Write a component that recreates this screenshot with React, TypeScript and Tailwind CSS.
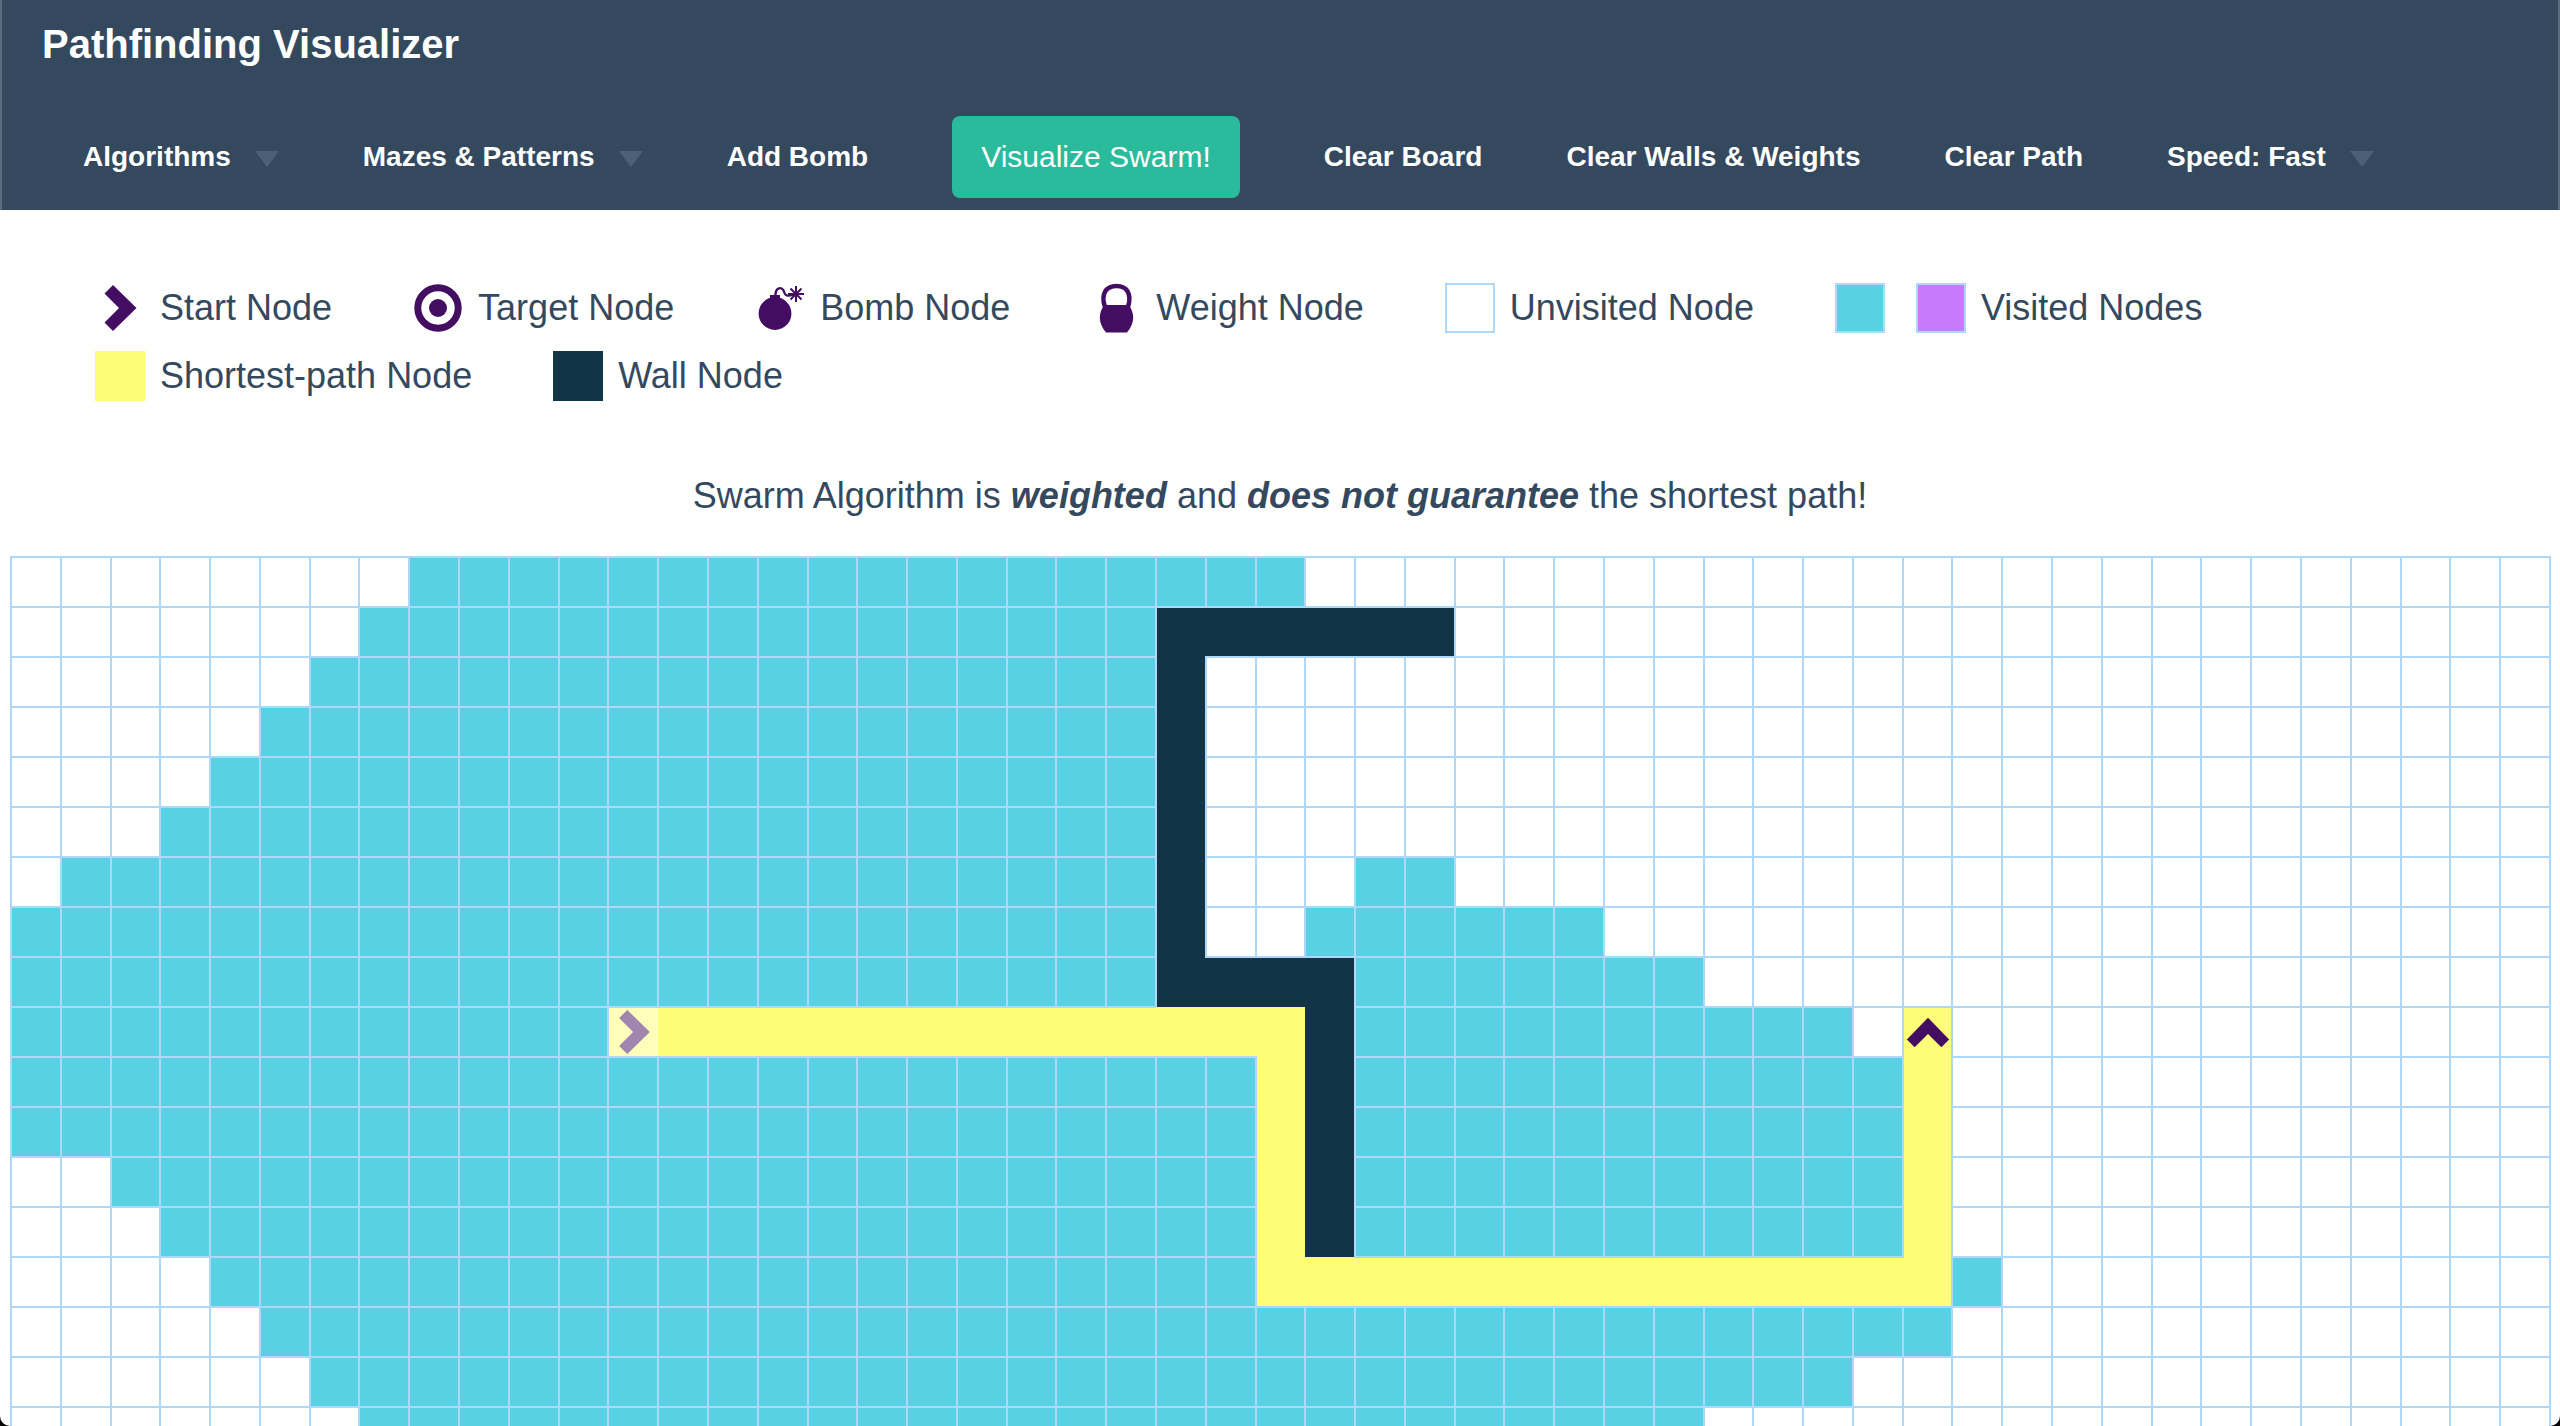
import React from "react";

type CellKind = "empty" | "visited" | "wall" | "path" | "start" | "target";
type Run = [kind: CellKind, from: number, to: number];

const COLUMNS = 51;

const ROWS: Run[][] = [
  [["visited", 8, 25]],
  [["visited", 7, 22], ["wall", 23, 28]],
  [["visited", 6, 22], ["wall", 23, 23]],
  [["visited", 5, 22], ["wall", 23, 23]],
  [["visited", 4, 22], ["wall", 23, 23]],
  [["visited", 3, 22], ["wall", 23, 23]],
  [["visited", 1, 22], ["wall", 23, 23], ["visited", 27, 28]],
  [["visited", 0, 22], ["wall", 23, 23], ["visited", 26, 31]],
  [["visited", 0, 22], ["wall", 23, 26], ["visited", 27, 33]],
  [["visited", 0, 11], ["start", 12, 12], ["path", 13, 25], ["wall", 26, 26], ["visited", 27, 36], ["target", 38, 38]],
  [["visited", 0, 24], ["path", 25, 25], ["wall", 26, 26], ["visited", 27, 37], ["path", 38, 38]],
  [["visited", 0, 24], ["path", 25, 25], ["wall", 26, 26], ["visited", 27, 37], ["path", 38, 38]],
  [["visited", 2, 24], ["path", 25, 25], ["wall", 26, 26], ["visited", 27, 37], ["path", 38, 38]],
  [["visited", 3, 24], ["path", 25, 25], ["wall", 26, 26], ["visited", 27, 37], ["path", 38, 38]],
  [["visited", 4, 24], ["path", 25, 38], ["visited", 39, 39]],
  [["visited", 5, 38]],
  [["visited", 6, 36]],
  [["visited", 7, 33]],
];

const CELL_CLASS: Record<CellKind, string> = {
  empty: "border-2 border-[#afd8f8]",
  visited: "border-2 border-[#afd8f8] bg-[#59d0e4]",
  wall: "bg-[#113547]",
  path: "bg-[#fffc77]",
  start: "bg-[#fffc77] opacity-50",
  target: "bg-[#fffc77]",
};

function cellsOf(runs: Run[]): CellKind[] {
  const cells: CellKind[] = Array(COLUMNS).fill("empty");
  for (const [kind, from, to] of runs) cells.fill(kind, from, to + 1);
  return cells;
}

function Chevron({ className }: { className: string }) {
  return (
    <svg viewBox="0 0 50 50" className={className} aria-hidden="true">
      <path d="M18 2 9.500 10.500 24 25 9.500 39.500 18 48 41.500 25Z" fill="#430e61" />
    </svg>
  );
}

function TargetIcon() {
  return (
    <svg viewBox="0 0 50 50" className="size-[50px]" aria-hidden="true">
      <circle cx="25" cy="25" r="20.2" fill="none" stroke="#430e61" strokeWidth="7" />
      <circle cx="25" cy="25" r="9" fill="#430e61" />
    </svg>
  );
}

function BombIcon() {
  return (
    <svg viewBox="0 0 50 50" className="size-[50px]" aria-hidden="true">
      <g transform="translate(2 0)">
        <circle cx="18" cy="30.5" r="16.4" fill="#430e61" />
        <path d="M13 12h10v6H13z" fill="#430e61" />
        <path d="M18.500 13C18 3.500 25.500 3.500 27 8.500C28 12 29 13 32 12.500L39 11" fill="none" stroke="#430e61" strokeWidth="2.400" />
        <path d="M39 3v16M31 11h16M33.500 5.500l11 11M44.500 5.500l-11 11" stroke="#430e61" strokeWidth="2" />
      </g>
    </svg>
  );
}

function WeightIcon() {
  return (
    <svg viewBox="0 0 50 50" className="size-[50px]" aria-hidden="true">
      <path d="M14 24C9.500 11 15 3 25.500 3S41 11 37 24" fill="none" stroke="#430e61" strokeWidth="4.500" />
      <path d="M13.500 22H37.500C44 30 44 40 36 49.500H15C7 40 7 30 13.500 22Z" fill="#430e61" />
    </svg>
  );
}

function Swatch({ className }: { className: string }) {
  return <span className={`block size-[50px] ${className}`} />;
}

function LegendItem({ label, children }: { label: string; children: React.ReactNode }) {
  return (
    <li className="flex items-center gap-[15px]">
      {children}
      <span>{label}</span>
    </li>
  );
}

function NavItem({ label, menu = false }: { label: string; menu?: boolean }) {
  return (
    <button type="button" className="flex items-center gap-6 text-[28px] leading-8 font-bold">
      {label}
      {menu && (
        <svg viewBox="0 0 24 16" className="mt-1 h-4 w-6" aria-hidden="true">
          <path d="M0 0h24L12 16Z" fill="#4b6075" />
        </svg>
      )}
    </button>
  );
}

export default function App() {
  return (
    <div className="h-screen overflow-hidden bg-black font-['Helvetica_Neue','Liberation_Sans',Arial,sans-serif] text-[#34495e]">
      <div className="flex h-full flex-col overflow-hidden rounded-b-[10px] bg-white">
        <header className="shrink-0 border-x-2 border-[#5a6c7d] bg-[#34495e] pb-3 text-white">
          <h1 className="px-10 pt-5 pb-12 text-[40px] leading-12 font-bold">
            <a href="#">Pathfinding Visualizer</a>
          </h1>
          <nav className="flex items-center gap-[84px] px-[81px]">
            <NavItem label="Algorithms" menu />
            <NavItem label="Mazes & Patterns" menu />
            <NavItem label="Add Bomb" />
            <button type="button" className="rounded-lg bg-[#2abb9c] px-[29px] py-[23px] text-[30px] leading-9">
              Visualize Swarm!
            </button>
            <NavItem label="Clear Board" />
            <NavItem label="Clear Walls & Weights" />
            <NavItem label="Clear Path" />
            <NavItem label="Speed: Fast" menu />
          </nav>
        </header>

        <ul className="flex shrink-0 flex-wrap gap-x-[81px] gap-y-[18px] px-[95px] pt-[73px] text-[36px] leading-10">
          <LegendItem label="Start Node"><Chevron className="size-[50px]" /></LegendItem>
          <LegendItem label="Target Node"><TargetIcon /></LegendItem>
          <LegendItem label="Bomb Node"><BombIcon /></LegendItem>
          <LegendItem label="Weight Node"><WeightIcon /></LegendItem>
          <LegendItem label="Unvisited Node"><Swatch className="border-2 border-[#afd8f8]" /></LegendItem>
          <LegendItem label="Visited Nodes">
            <span className="flex gap-[31px]">
              <Swatch className="border-2 border-[#afd8f8] bg-[#59d0e4]" />
              <Swatch className="border-2 border-[#afd8f8] bg-[#c57bfc]" />
            </span>
          </LegendItem>
          <LegendItem label="Shortest-path Node"><Swatch className="bg-[#fffc77]" /></LegendItem>
          <LegendItem label="Wall Node"><Swatch className="bg-[#113547]" /></LegendItem>
        </ul>

        <p className="shrink-0 pt-[74px] pb-10 text-center text-[36px] leading-[41px]">
          Swarm Algorithm is <i><b>weighted</b></i> and <i><b>does not guarantee</b></i> the shortest path!
        </p>

        <div className="min-h-0 pr-[9px] pl-[10px]">
          <table className="w-full table-fixed border-collapse">
            <tbody>
              {ROWS.map((runs, y) => (
                <tr key={y} className="h-[50px]">
                  {cellsOf(runs).map((kind, x) => (
                    <td key={x} className={`p-0 ${CELL_CLASS[kind]}`}>
                      {kind === "start" && <Chevron className="mx-auto size-12" />}
                      {kind === "target" && <Chevron className="mx-auto size-[46px] -rotate-90" />}
                    </td>
                  ))}
                </tr>
              ))}
            </tbody>
          </table>
        </div>
      </div>
    </div>
  );
}
